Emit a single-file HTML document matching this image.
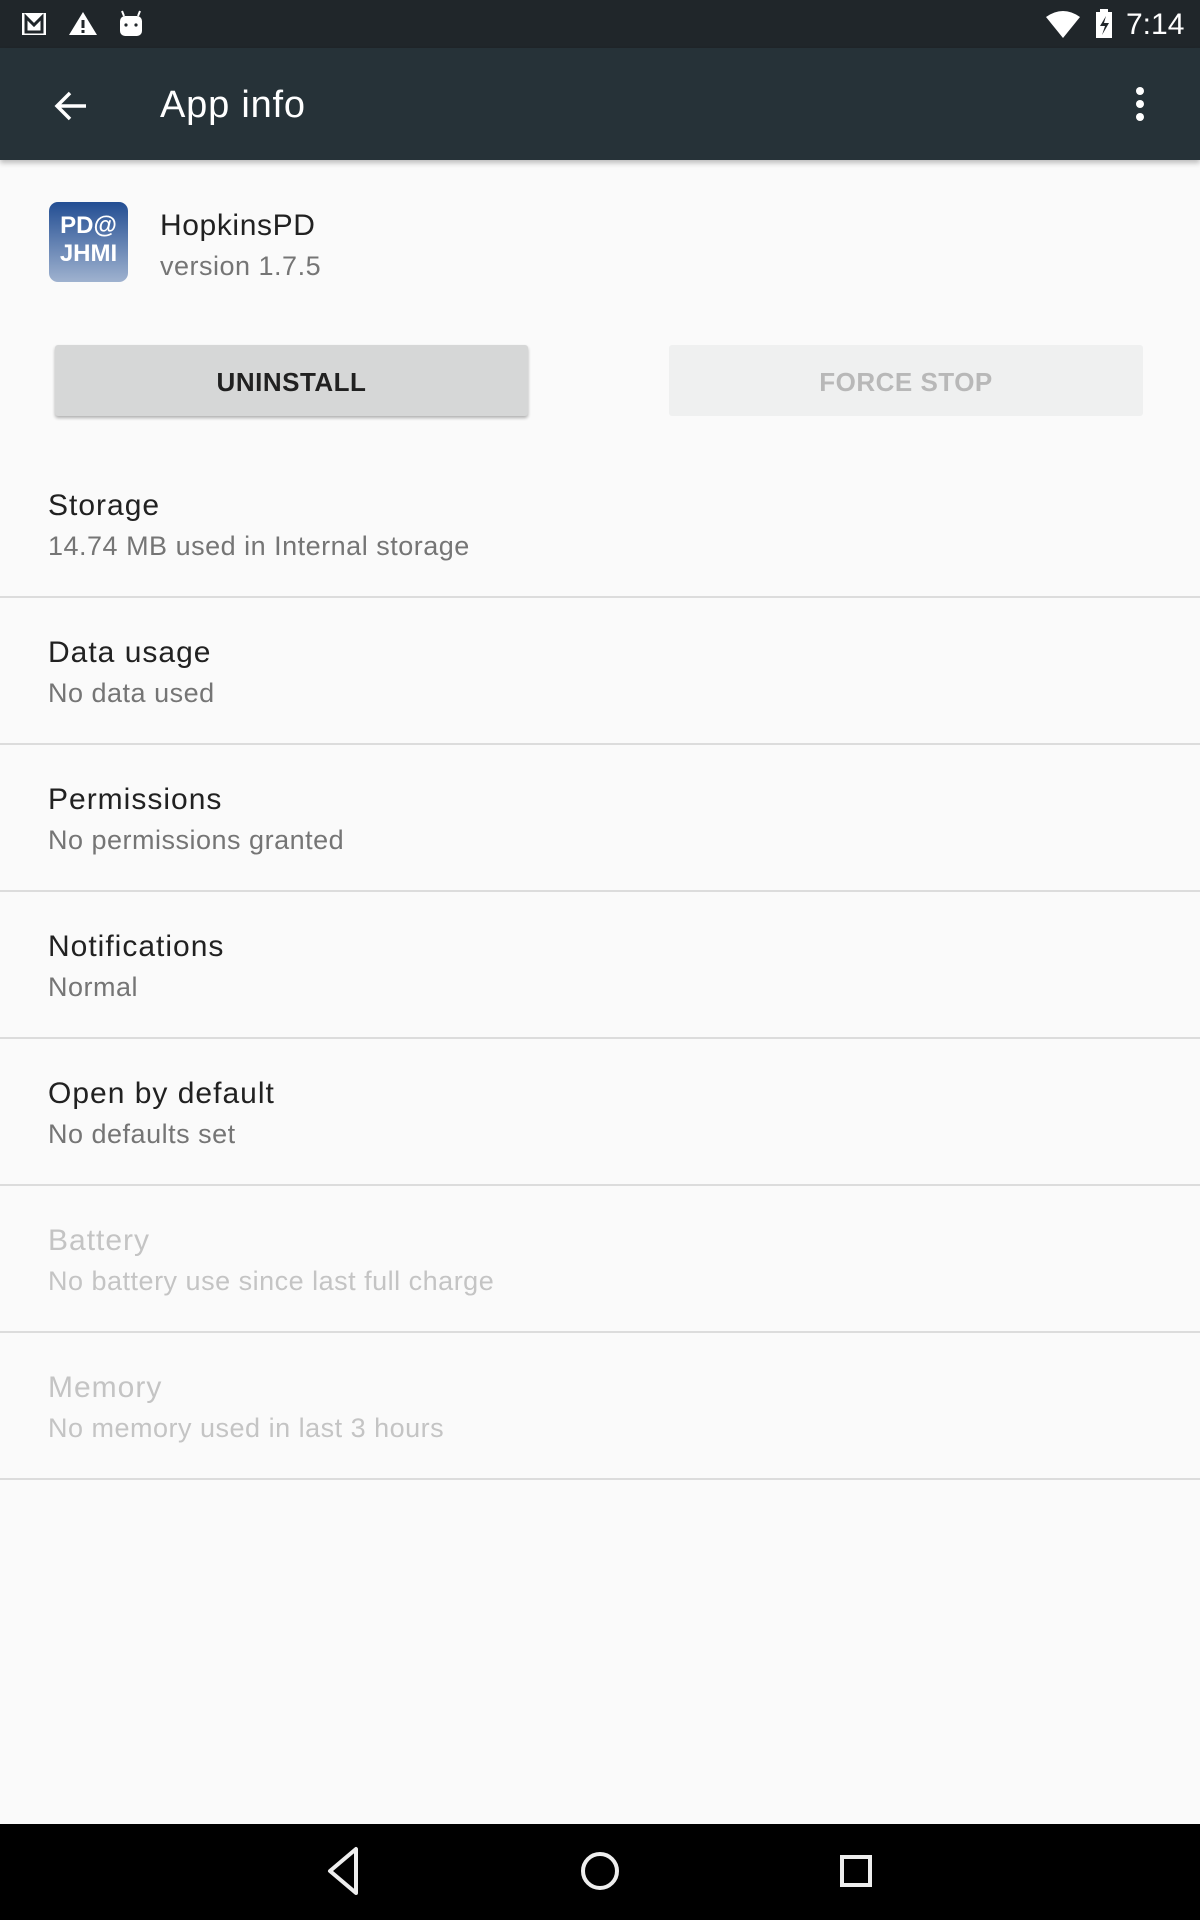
<!DOCTYPE html>
<html><head><meta charset="utf-8"><style>
*{margin:0;padding:0;box-sizing:border-box}
body{width:1200px;height:1920px;background:#fafafa;font-family:"Liberation Sans",sans-serif;position:relative;overflow:hidden}
.abs{position:absolute}
.sb{left:0;top:0;width:1200px;height:48px;background:#20262a}
.tb{left:0;top:48px;width:1200px;height:112px;background:#263238;box-shadow:0 3px 5px rgba(0,0,0,.25)}
.t{position:absolute;left:48px;font-size:30px;letter-spacing:1px;color:#212121;white-space:nowrap}
.s{position:absolute;left:48px;font-size:27px;letter-spacing:.5px;color:#757575;white-space:nowrap}
.d{position:absolute;left:0;width:1200px;height:2px;background:#dcdcdc}
.dis .t,.dis .s{color:#c4c4c4}
</style></head><body>
<div class="abs sb"></div>
<svg class="abs" style="left:20px;top:10px" width="130" height="30">
<rect x="2" y="3" width="24" height="22" fill="#fff"/><path d="M6 7 L14 15 L22 7 V22 H6 Z" fill="none" stroke="#20262a" stroke-width="3"/>
<path d="M63 2 L77 25 H49 Z" fill="#fff"/><rect x="61.5" y="10" width="3" height="8" fill="#20262a"/><rect x="61.5" y="20" width="3" height="3" fill="#20262a"/>
<rect x="100" y="6" width="22" height="20" rx="5" fill="#fff"/><circle cx="106" cy="15" r="1.6" fill="#20262a"/><circle cx="116" cy="15" r="1.6" fill="#20262a"/><path d="M104 6 l-2 -5 M118 6 l2 -5" stroke="#fff" stroke-width="2"/>
</svg>
<svg class="abs" style="left:1044px;top:8px" width="70" height="34">
<path d="M2 9 Q19 -3 36 9 L19 30 Z" fill="#fff"/>
<rect x="52" y="4" width="16" height="26" fill="#fff"/><rect x="56" y="1" width="8" height="4" fill="#fff"/><path d="M62 8 L56 18 H61 L58 27 L65 15 H60 Z" fill="#20262a"/>
</svg>
<div class="abs" style="left:1126px;top:8px;font-size:30px;color:#fff">7:14</div>
<div class="abs tb"></div>
<svg class="abs" style="left:52px;top:88px" width="40" height="36"><path d="M34 18 H6 M18 5 L5 18 L18 31" stroke="#fff" stroke-width="3.5" fill="none"/></svg>
<div class="abs" style="left:160px;top:84px;font-size:38px;letter-spacing:.8px;color:#fff">App info</div>
<svg class="abs" style="left:1130px;top:86px" width="20" height="40"><circle cx="10" cy="5" r="4" fill="#fff"/><circle cx="10" cy="18" r="4" fill="#fff"/><circle cx="10" cy="31" r="4" fill="#fff"/></svg>
<div class="abs" style="left:49px;top:202px;width:79px;height:80px;border-radius:9px;background:linear-gradient(#234e93,#9fb2cf);color:#fff;font-weight:bold;font-size:24px;line-height:28px;text-align:center;padding-top:10px">PD@<br>JHMI</div>
<div class="abs" style="left:160px;top:209px;font-size:30px;letter-spacing:.6px;color:#212121">HopkinsPD</div>
<div class="abs" style="left:160px;top:251px;font-size:27px;letter-spacing:.5px;color:#757575">version 1.7.5</div>
<div class="abs" style="left:55px;top:345px;width:473px;height:71px;background:#d6d7d7;border-radius:3px;box-shadow:0 2px 3px rgba(0,0,0,.3);text-align:center;line-height:74px;font-size:26px;font-weight:bold;color:#212121;letter-spacing:.5px">UNINSTALL</div>
<div class="abs" style="left:669px;top:345px;width:474px;height:71px;background:#eff0f0;border-radius:3px;text-align:center;line-height:74px;font-size:26px;font-weight:bold;color:#b8b8b8;letter-spacing:.5px">FORCE STOP</div>
<div class="t" style="top:489px">Storage</div><div class="s" style="top:531px">14.74 MB used in Internal storage</div><div class="d" style="top:596px"></div>
<div class="t" style="top:636px">Data usage</div><div class="s" style="top:678px">No data used</div><div class="d" style="top:743px"></div>
<div class="t" style="top:783px">Permissions</div><div class="s" style="top:825px">No permissions granted</div><div class="d" style="top:890px"></div>
<div class="t" style="top:930px">Notifications</div><div class="s" style="top:972px">Normal</div><div class="d" style="top:1037px"></div>
<div class="t" style="top:1077px">Open by default</div><div class="s" style="top:1119px">No defaults set</div><div class="d" style="top:1184px"></div>
<div class="dis"><div class="t" style="top:1224px">Battery</div><div class="s" style="top:1266px">No battery use since last full charge</div></div><div class="d" style="top:1331px"></div>
<div class="dis"><div class="t" style="top:1371px">Memory</div><div class="s" style="top:1413px">No memory used in last 3 hours</div></div><div class="d" style="top:1478px"></div>
<div class="abs" style="left:0;top:1824px;width:1200px;height:96px;background:#000"></div>
<svg class="abs" style="left:0;top:1824px" width="1200" height="96">
<path d="M356 25 V69 L330 47 Z" fill="none" stroke="#eee" stroke-width="4" stroke-linejoin="round"/>
<circle cx="600" cy="47" r="17" fill="none" stroke="#eee" stroke-width="4"/>
<rect x="842" y="33" width="28" height="28" fill="none" stroke="#eee" stroke-width="4"/>
</svg>
</body></html>
